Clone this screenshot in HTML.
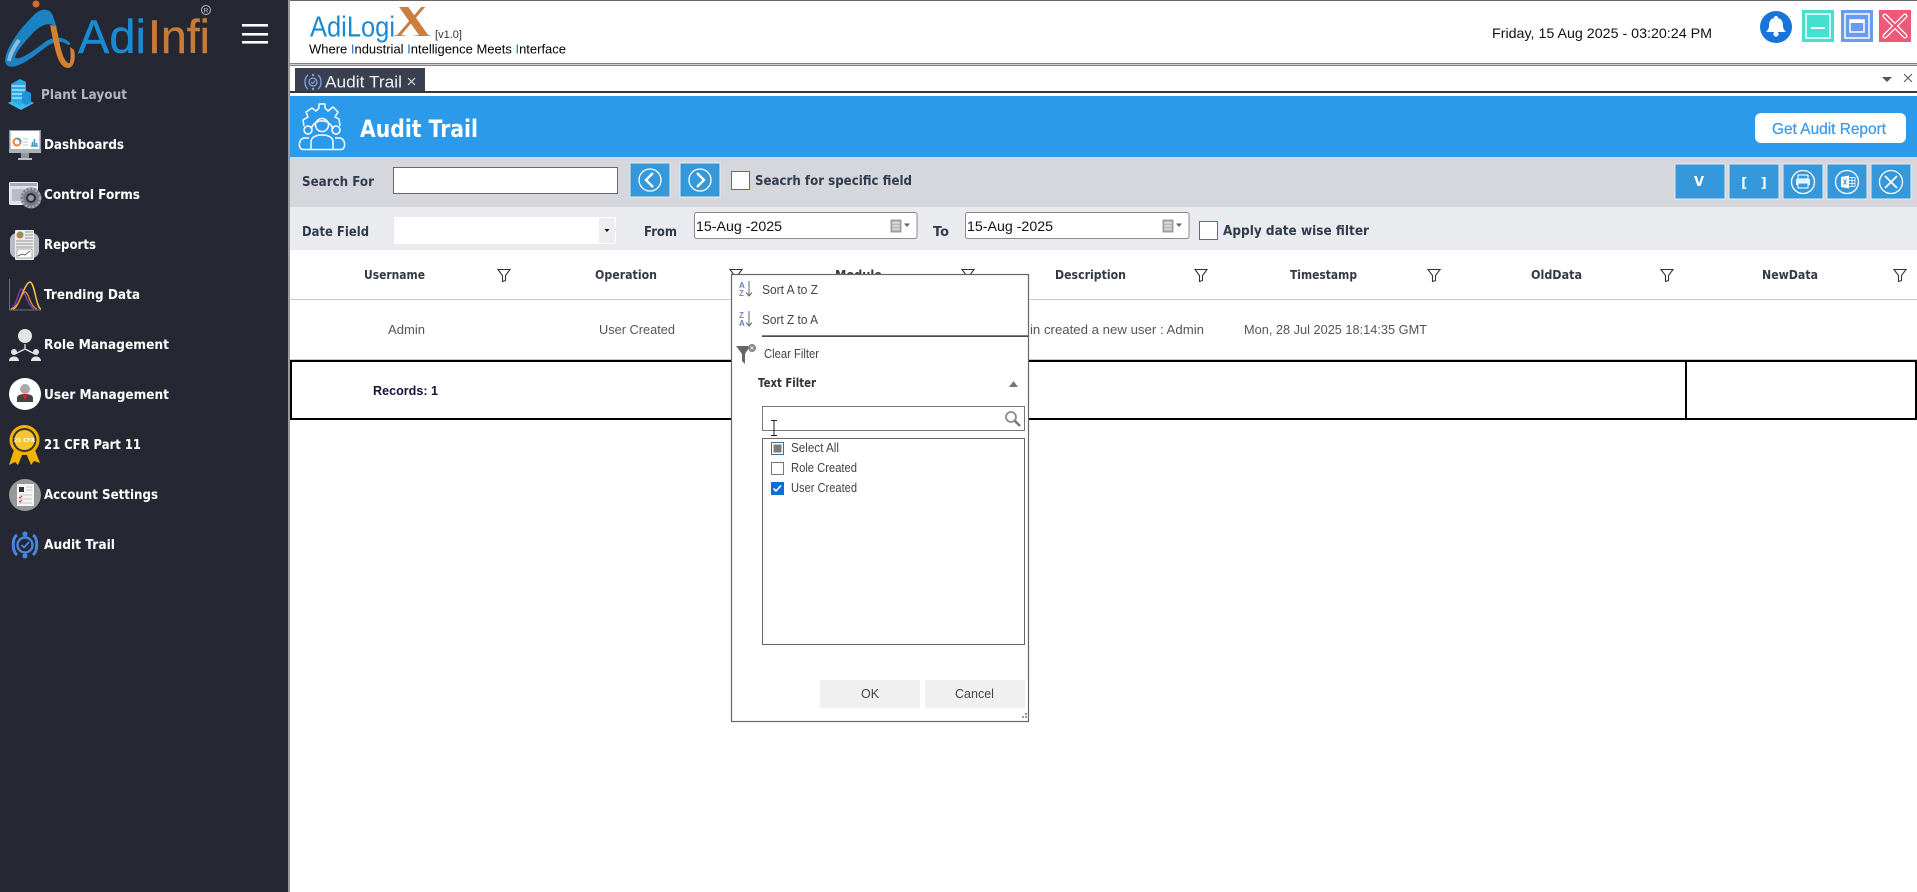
<!DOCTYPE html>
<html lang="en">
<head>
<meta charset="utf-8">
<title>Audit Trail</title>
<style>
html,body{margin:0;padding:0;width:1917px;height:892px;overflow:hidden;background:#fff}
svg{position:absolute;left:0;top:0;display:block}
.b{font-family:"DejaVu Sans",sans-serif;font-weight:700}
.r{font-family:"Liberation Sans",sans-serif}
.d{font-family:"DejaVu Sans",sans-serif}
</style>
</head>
<body>
<svg width="1917" height="892" viewBox="0 0 1917 892" xmlns="http://www.w3.org/2000/svg">
<defs><clipPath id="xc"><rect x="394" y="7" width="36" height="29"/></clipPath></defs>
<!-- backgrounds -->
<rect width="1917" height="892" fill="#fff"/>
<rect x="0" y="0" width="288" height="892" fill="#252833"/>
<rect x="288" y="0" width="2" height="892" fill="#9a9a9a"/>
<rect x="290" y="0" width="1627" height="1" fill="#666"/>
<rect x="290" y="63" width="1627" height="3" fill="#808080"/>
<rect x="290" y="64" width="1627" height="1" fill="#d0d0d0"/>
<rect x="295" y="68" width="130" height="24" fill="#3b4050"/>
<rect x="290" y="91" width="1627" height="2" fill="#333740"/>
<rect x="290" y="96" width="1627" height="61" fill="#2b9aea"/>
<rect x="290" y="157" width="1627" height="50" fill="#d6d7dc"/>
<rect x="290" y="207" width="1627" height="43" fill="#e9ebee"/>
<rect x="290" y="299" width="1627" height="1" fill="#c8c8c8"/>
<rect x="290" y="359" width="1627" height="1" fill="#c8c8c8"/>
<rect x="291" y="361" width="1625" height="58" fill="#fff" stroke="#000" stroke-width="2"/>
<rect x="1685" y="361" width="2" height="58" fill="#000"/>

<!-- sidebar logo -->
<path d="M33 16C41 7 50 8 53 16L57 28C50 21 41 24 31 35C22 45 16 52 15 58C22 60 34 50 45 42C55 35 65 37 71 44L68 45C62 40 55 41 46 47C33 57 17 70 8 66C3 63 5 54 11 44C17 33 25 24 33 16Z" fill="#1b82c4"/>
<path d="M19 40C14 47 10 55 9 61" stroke="#8fbcd8" stroke-width="4" fill="none"/>
<path d="M50 25L56 26C60 42 61 58 68 63C71 65 71 55 70 47L74 50C76 58 74 68 68 68C58 68 55 50 50 25Z" fill="#d6812f"/>
<circle cx="36" cy="4" r="3.5" fill="#e0682a"/>
<text x="78" y="53" font-size="47" class="r" fill="#1a8ad2" stroke="#1a8ad2" stroke-width=".4" textLength="68" lengthAdjust="spacingAndGlyphs">Adi</text>
<text x="148" y="53" font-size="47" class="r" fill="#c87a38" stroke="#c87a38" stroke-width=".4" textLength="62" lengthAdjust="spacingAndGlyphs">Infi</text>
<circle cx="206" cy="10" r="4.5" fill="none" stroke="#bbb" stroke-width="1"/>
<text x="206" y="12.5" font-size="6.5" class="r" fill="#ccc" text-anchor="middle">R</text>
<rect x="242" y="24" width="26" height="2.6" fill="#fff"/>
<rect x="242" y="33" width="26" height="2.6" fill="#fff"/>
<rect x="242" y="41" width="26" height="2.6" fill="#fff"/>

<!-- sidebar icons -->
<g>
<path d="M8 103L21 96L34 103L21 110Z" fill="#38bdf0"/>
<path d="M11 84L20 79L26 82V102L20 105L11 101Z" fill="#2aa8ea"/>
<path d="M12 86H25M12 90H25M12 94H25M12 98H25" stroke="#c6ecfb" stroke-width="1.2"/>
<path d="M22 93L27 91L31 93V103L26 105L22 103Z" fill="#1f92d8"/>
</g>
<g>
<rect x="9" y="130" width="32" height="21" fill="#8b9aa3"/>
<rect x="10.500" y="131" width="29" height="18" fill="#fff"/>
<circle cx="17" cy="142" r="3.500" fill="none" stroke="#e8843c" stroke-width="2"/>
<path d="M17 138.500a3.500 3.500 0 0 1 3.500 3.500" fill="none" stroke="#2a9fd0" stroke-width="2"/>
<path d="M31 146H38M32.500 146V142M34.500 146V139M36.500 146V143" stroke="#3ba1c8" stroke-width="1.600"/>
<path d="M23 139H28M23 142H28M23 145H28" stroke="#c5c5c5"/>
<rect x="9" y="149" width="32" height="4" fill="#a9b4ba"/>
<rect x="21" y="153" width="8" height="5" fill="#8f9aa0"/>
<rect x="18" y="158" width="14" height="2" fill="#b8bfc3"/>
</g>
<g>
<rect x="9.500" y="182.500" width="28" height="22" rx="1" fill="#dfe1e6" stroke="#f2f2f2"/>
<rect x="10" y="183" width="27" height="3" fill="#a9acb4"/>
<rect x="12" y="189" width="13" height="12" fill="#b8bcc4"/>
<circle cx="31" cy="198" r="10.500" fill="#787b85"/>
<circle cx="31" cy="198" r="9" fill="none" stroke="#a9abb3" stroke-width="2.500" stroke-dasharray="2 1.600"/>
<circle cx="31" cy="198" r="5" fill="#2e3038"/>
<circle cx="31" cy="198" r="3" fill="#9598a0"/>
</g>
<g>
<rect x="10" y="233" width="29" height="25" rx="7" fill="#b8bbc1"/>
<rect x="15" y="230" width="19" height="30" rx="1" fill="#eeeeee"/>
<circle cx="20" cy="235" r="3.500" fill="#d9704d"/>
<path d="M20 235V231.500A3.500 3.500 0 0 1 23.500 235Z" fill="#5aa56a"/>
<path d="M25 232H33M25 235H33M25 238H33M16 241H33M16 244H33M16 247H33" stroke="#8e9197" stroke-width="1.100"/>
<rect x="17" y="249" width="15" height="9" fill="#fff" stroke="#777" stroke-width=".6"/>
<path d="M18 256L22 254L25 255L30 251" stroke="#444" fill="none" stroke-width=".8"/>
</g>
<g fill="none">
<path d="M9.500 279V310H41" stroke="#6f727b" stroke-width="1"/>
<path d="M10 309C16 309 19 289 21 289C25 289 27 305 34 309" stroke="#6a3fb5" stroke-width="1.500"/>
<path d="M13 309C19 308 24 283 30 282C35 283 36 308 41 309" stroke="#f5c542" stroke-width="1.500"/>
<path d="M11 309C18 308 22 292 25 292C29 292 30 307 37 309" stroke="#e88a3a" stroke-width="1.300"/>
</g>
<g fill="#e4e4e4">
<circle cx="25" cy="336" r="7"/>
<path d="M25 344V349L15 354M25 349L35 354" stroke="#e4e4e4" stroke-width="1.300" fill="none"/>
<circle cx="14" cy="352" r="3"/><circle cx="36" cy="352" r="3"/>
<path d="M9 361C9 355 19 355 19 361ZM31 361C31 355 41 355 41 361Z"/>
</g>
<g>
<circle cx="25" cy="394" r="16" fill="#fff"/>
<circle cx="25" cy="389" r="5" fill="#a8a8a8"/>
<path d="M17 402V398C17 395 21 394 25 394C29 394 33 395 33 398V402Z" fill="#444"/>
<path d="M22 394H28L25 400Z" fill="#d81e2a"/>
</g>
<g>
<path d="M14 450L9 465L15 462L18 465L23 453ZM35 450L40 463L34 461L31 465L26 453Z" fill="#f2b200"/>
<circle cx="24.500" cy="440" r="15" fill="#f2b200"/>
<circle cx="24.500" cy="440" r="12" fill="#3a3326"/>
<circle cx="24.500" cy="440" r="10" fill="#f7c531"/>
<text x="24.500" y="442" font-size="5.500" class="b" fill="#fff" text-anchor="middle">21 CFR</text>
</g>
<g>
<circle cx="25" cy="495" r="16" fill="#999"/>
<rect x="17" y="484" width="17" height="22" fill="#f4f4f4"/>
<rect x="19" y="487" width="5" height="5" fill="#333"/>
<path d="M26 487H32M26 490H32M19 495H32M19 499H32M19 503H32" stroke="#c8c8c8"/>
<path d="M19 497l1 1 2-2M19 501l1 1 2-2" stroke="#c33" fill="none"/>
</g>
<g fill="none" stroke="#4a86e0">
<path d="M17 535C12 538 12 551 17 555" stroke-width="3"/>
<path d="M33 535C38 538 38 551 33 555" stroke-width="3"/>
<circle cx="25" cy="545" r="7.500" stroke-width="2.400"/>
<path d="M21.500 545l2.500 2.500 5-5.500" stroke-width="1.800"/>
<circle cx="25" cy="534" r="2.500" fill="#4a86e0" stroke="none"/>
<circle cx="25" cy="556" r="2.500" fill="#4a86e0" stroke="none"/>
</g>

<!-- sidebar labels -->
<g class="b" font-size="13.500" fill="#fff">
<text x="41" y="99" fill="#b5b7bc" textLength="86" lengthAdjust="spacingAndGlyphs">Plant Layout</text>
<text x="44" y="149" textLength="80" lengthAdjust="spacingAndGlyphs">Dashboards</text>
<text x="44" y="199" textLength="96" lengthAdjust="spacingAndGlyphs">Control Forms</text>
<text x="44" y="249" textLength="52" lengthAdjust="spacingAndGlyphs">Reports</text>
<text x="44" y="299" textLength="96" lengthAdjust="spacingAndGlyphs">Trending Data</text>
<text x="44" y="349" textLength="125" lengthAdjust="spacingAndGlyphs">Role Management</text>
<text x="44" y="399" textLength="125" lengthAdjust="spacingAndGlyphs">User Management</text>
<text x="44" y="449" textLength="97" lengthAdjust="spacingAndGlyphs">21 CFR Part 11</text>
<text x="44" y="499" textLength="114" lengthAdjust="spacingAndGlyphs">Account Settings</text>
<text x="44" y="549" textLength="71" lengthAdjust="spacingAndGlyphs">Audit Trail</text>
</g>

<!-- top header -->
<text x="310" y="36.500" font-size="29" class="r" fill="#1e88d2" textLength="85" lengthAdjust="spacingAndGlyphs">AdiLogi</text>
<g clip-path="url(#xc)"><text x="392" y="37.500" font-size="52" font-family="Liberation Serif" font-weight="700" fill="#c97f3d" textLength="41" lengthAdjust="spacingAndGlyphs">X</text></g>
<text x="435" y="38" font-size="11" class="r" fill="#333" textLength="27" lengthAdjust="spacingAndGlyphs">[v1.0]</text>
<text x="309" y="53.500" font-size="13" class="r" fill="#000" textLength="257" lengthAdjust="spacingAndGlyphs">Where <tspan fill="#1e6fc8">I</tspan>ndustrial <tspan fill="#1e6fc8">I</tspan>ntelligence Meets <tspan fill="#1e6fc8">I</tspan>nterface</text>
<text x="1492" y="38" font-size="14" class="r" fill="#111" textLength="220" lengthAdjust="spacingAndGlyphs">Friday, 15 Aug 2025 - 03:20:24 PM</text>
<circle cx="1776" cy="27" r="16" fill="#1a73d8"/>
<path d="M1776 16a2 2 0 0 1 2 2c4 1 5 4 5 8 0 3 2 5 3 6h-20c1-1 3-3 3-6 0-4 1-7 5-8a2 2 0 0 1 2-2Z" fill="#fff"/>
<circle cx="1776" cy="34" r="2.600" fill="#fff"/>
<rect x="1802" y="10" width="32" height="32" fill="#45e0cf"/>
<rect x="1806" y="14" width="24" height="24" fill="none" stroke="#fff" stroke-width="1.500"/>
<rect x="1811" y="27" width="14" height="2" fill="#fff"/>
<rect x="1841" y="10" width="32" height="32" fill="#6a9bf0"/>
<rect x="1845" y="14" width="24" height="24" fill="none" stroke="#fff" stroke-width="1.500"/>
<rect x="1850" y="20" width="14" height="12" fill="none" stroke="#fff" stroke-width="1.500"/>
<rect x="1850" y="20" width="14" height="3" fill="#fff"/>
<rect x="1879" y="10" width="32" height="32" fill="#f0587a"/>
<path d="M1885 16L1905 36M1905 16L1885 36" stroke="#fff" stroke-width="5" stroke-linecap="round"/>
<path d="M1885 16L1905 36M1905 16L1885 36" stroke="#f0587a" stroke-width="2.400" stroke-linecap="round"/>

<!-- tab strip -->
<g fill="none" stroke="#7ea6e8">
<path d="M308 75C304 78 304 86 308 89M318 75C322 78 322 86 318 89" stroke-width="1.300"/>
<circle cx="313" cy="82" r="4" stroke-width="1.200"/>
<path d="M311 82l1.500 1.500 3-3" stroke-width="1"/>
<circle cx="313" cy="75" r="1.200" fill="#7ea6e8" stroke="none"/>
<circle cx="313" cy="89" r="1.200" fill="#7ea6e8" stroke="none"/>
</g>
<text x="325" y="87.500" font-size="16.500" class="r" fill="#f2f2f2" textLength="77" lengthAdjust="spacingAndGlyphs">Audit Trail</text>
<path d="M408 78l7 7M415 78l-7 7" stroke="#ddd" stroke-width="1.200"/>
<path d="M1882 77H1892L1887 82Z" fill="#555"/>
<path d="M1904 74l8 8M1912 74l-8 8" stroke="#555" stroke-width="1"/>

<!-- blue title bar -->
<g fill="none" stroke="#fff" stroke-width="1.500" stroke-linejoin="round">
<path d="M304 126L303 120L308 117L306 112L312 108L316 111L319 108V104H325V108L328 111L333 107L338 112L335 117L339 119L340 126"/>
<circle cx="322" cy="125" r="6.500"/>
<path d="M311 129A11.500 11.500 0 0 1 333 129"/>
<circle cx="308" cy="130" r="4"/>
<circle cx="336" cy="130" r="4"/>
<path d="M311 149.500V142C311 137 316 135 322 135C328 135 333 137 333 142V149.500Z"/>
<path d="M311 149.500H303C298 149.500 298 139 304 138H309M333 149.500H341C346 149.500 346 139 340 138H335"/>
</g>
<text x="360" y="137" font-size="24" class="b" fill="#fff" textLength="118" lengthAdjust="spacingAndGlyphs">Audit Trail</text>
<rect x="1755" y="113" width="151" height="30" rx="6" fill="#fff"/>
<text x="1772" y="134" font-size="16" class="r" fill="#3d9ae8" stroke="#3d9ae8" stroke-width=".25" textLength="114" lengthAdjust="spacingAndGlyphs">Get Audit Report</text>

<!-- search row -->
<text x="302" y="186" font-size="13.500" class="b" fill="#2f3a4c" textLength="72" lengthAdjust="spacingAndGlyphs">Search For</text>
<rect x="393.500" y="167.500" width="224" height="26" fill="#fff" stroke="#6a6a6a"/>
<rect x="630" y="163" width="40" height="34" fill="#3498db" stroke="#e6e8ea"/>
<circle cx="650" cy="180" r="11" fill="none" stroke="#fff" stroke-width="1.300"/>
<path d="M653 173L646 180L653 187" fill="none" stroke="#fff" stroke-width="2.400"/>
<rect x="680" y="163" width="40" height="34" fill="#3498db" stroke="#e6e8ea"/>
<circle cx="700" cy="180" r="11" fill="none" stroke="#fff" stroke-width="1.300"/>
<path d="M697 173L704 180L697 187" fill="none" stroke="#fff" stroke-width="2.400"/>
<rect x="731.500" y="171.500" width="18" height="18" fill="#fff" stroke="#2f7f9f"/>
<text x="755" y="185" font-size="13.500" class="b" fill="#2f3a4c" textLength="157" lengthAdjust="spacingAndGlyphs">Seacrh for specific field</text>
<g fill="#3498db" stroke="#e6e8ea">
<rect x="1675" y="164" width="50" height="35"/>
<rect x="1729" y="164" width="50" height="35"/>
<rect x="1783" y="164" width="40" height="35"/>
<rect x="1827" y="164" width="40" height="35"/>
<rect x="1871" y="164" width="40" height="35"/>
</g>
<text x="1699" y="186" font-size="13" class="b" fill="#fff" text-anchor="middle">V</text>
<text x="1754" y="187" font-size="13" class="b" fill="#fff" text-anchor="middle" xml:space="preserve">[   ]</text>
<g fill="none" stroke="#fff">
<circle cx="1803" cy="182" r="11.500" stroke-width="1.300"/>
<rect x="1798" y="175" width="10" height="4" stroke-width="1.100"/>
<rect x="1796" y="179" width="14" height="6" fill="#e4f1fa" stroke="none"/>
<rect x="1798" y="183" width="10" height="5" fill="#3498db" stroke-width="1"/>
<circle cx="1847" cy="182" r="11.500" stroke-width="1.300"/>
<path d="M1841 177L1849 175.500V188.500L1841 187Z" fill="#fff" stroke="none"/>
<path d="M1843.500 179.500L1846.500 184.500M1846.500 179.500L1843.500 184.500" stroke="#3498db" stroke-width="1.100"/>
<path d="M1849 177.500H1855V186.500H1849M1852 177.500V186.500M1849 180.500H1855M1849 183.500H1855" stroke-width=".8"/>
<circle cx="1891" cy="182" r="11.500" stroke-width="1.300"/>
<path d="M1885 176L1897 188M1897 176L1885 188" stroke-width="1.700"/>
</g>

<!-- date row -->
<text x="302" y="236" font-size="13.500" class="b" fill="#2f3a4c" textLength="67" lengthAdjust="spacingAndGlyphs">Date Field</text>
<rect x="394" y="217" width="222" height="27" fill="#fff"/>
<rect x="599" y="218" width="16" height="25" fill="#eeeeee"/>
<path d="M604.500 229H609.500L607 232Z" fill="#111"/>
<text x="644" y="236" font-size="13.500" class="b" fill="#2f3a4c" textLength="33" lengthAdjust="spacingAndGlyphs">From</text>
<g>
<rect x="694.500" y="212.500" width="222.500" height="26" rx="2" fill="#fff" stroke="#8a8a8a"/>
<text x="696" y="231" font-size="14" class="r" fill="#111" textLength="86" lengthAdjust="spacingAndGlyphs">15-Aug -2025</text>
<rect x="891" y="220" width="10" height="12" fill="#b5b8bc" stroke="#777" stroke-width=".7"/>
<path d="M892.500 223H899.500M892.500 226H899.500M892.500 229H899.500" stroke="#fff" stroke-width=".8"/>
<path d="M904 223.500H910L907 227Z" fill="#666"/>
</g>
<text x="933" y="236" font-size="13.500" class="b" fill="#2f3a4c" textLength="16" lengthAdjust="spacingAndGlyphs">To</text>
<g>
<rect x="965.500" y="212.500" width="223.500" height="26" rx="2" fill="#fff" stroke="#8a8a8a"/>
<text x="967" y="231" font-size="14" class="r" fill="#111" textLength="86" lengthAdjust="spacingAndGlyphs">15-Aug -2025</text>
<rect x="1163" y="220" width="10" height="12" fill="#b5b8bc" stroke="#777" stroke-width=".7"/>
<path d="M1164.500 223H1171.500M1164.500 226H1171.500M1164.500 229H1171.500" stroke="#fff" stroke-width=".8"/>
<path d="M1176 223.500H1182L1179 227Z" fill="#666"/>
</g>
<rect x="1199.500" y="221.500" width="18" height="18" fill="#fff" stroke="#2f7f9f"/>
<text x="1223" y="235" font-size="13.500" class="b" fill="#2f3a4c" textLength="146" lengthAdjust="spacingAndGlyphs">Apply date wise filter</text>

<!-- grid header -->
<g class="b" font-size="12.500" fill="#333a45">
<text x="364" y="279" textLength="61" lengthAdjust="spacingAndGlyphs">Username</text>
<text x="595" y="279" textLength="62" lengthAdjust="spacingAndGlyphs">Operation</text>
<text x="835" y="279" textLength="47" lengthAdjust="spacingAndGlyphs">Module</text>
<text x="1055" y="279" textLength="71" lengthAdjust="spacingAndGlyphs">Description</text>
<text x="1290" y="279" textLength="67" lengthAdjust="spacingAndGlyphs">Timestamp</text>
<text x="1531" y="279" textLength="51" lengthAdjust="spacingAndGlyphs">OldData</text>
<text x="1762" y="279" textLength="56" lengthAdjust="spacingAndGlyphs">NewData</text>
</g>
<g fill="none" stroke="#333" stroke-width="1.100">
<path d="M498 269.500H510L505.500 275.500V280.500L502.500 281.500V275.500Z"/>
<path d="M730 269.500H742L737.500 275.500V280.500L734.500 281.500V275.500Z"/>
<path d="M962 269.500H974L969.500 275.500V280.500L966.500 281.500V275.500Z"/>
<path d="M1195 269.500H1207L1202.500 275.500V280.500L1199.500 281.500V275.500Z"/>
<path d="M1428 269.500H1440L1435.500 275.500V280.500L1432.500 281.500V275.500Z"/>
<path d="M1661 269.500H1673L1668.500 275.500V280.500L1665.500 281.500V275.500Z"/>
<path d="M1894 269.500H1906L1901.500 275.500V280.500L1898.500 281.500V275.500Z"/>
</g>

<!-- grid row -->
<g class="r" font-size="13" fill="#555">
<text x="388" y="334" textLength="37" lengthAdjust="spacingAndGlyphs">Admin</text>
<text x="599" y="334" textLength="76" lengthAdjust="spacingAndGlyphs">User Created</text>
<text x="1030" y="334" textLength="174" lengthAdjust="spacingAndGlyphs">in created a new user : Admin</text>
<text x="1244" y="334" textLength="183" lengthAdjust="spacingAndGlyphs">Mon, 28 Jul 2025 18:14:35 GMT</text>
</g>
<text x="373" y="395" font-size="13" class="r" font-weight="700" fill="#14143c" textLength="65" lengthAdjust="spacingAndGlyphs">Records: 1</text>

<!-- filter popup -->
<rect x="731.500" y="274.500" width="297" height="447" fill="#fff" stroke="#666" stroke-width="1.200"/>
<g class="r" font-size="9" font-weight="700">
<text x="739" y="288" fill="#5a7fc0" font-size="8">A</text><text x="739" y="296" fill="#9a78c8" font-size="8">Z</text>
<text x="739" y="318" fill="#9a78c8" font-size="8">Z</text><text x="739" y="326" fill="#5a7fc0" font-size="8">A</text>
</g>
<path d="M749 281V296M746 292.500L749 296L752 292.500M749 311V326M746 322.500L749 326L752 322.500" fill="none" stroke="#666"/>
<g class="r" font-size="12.500" fill="#444">
<text x="762" y="294" textLength="56" lengthAdjust="spacingAndGlyphs">Sort A to Z</text>
<text x="762" y="324" textLength="56" lengthAdjust="spacingAndGlyphs">Sort Z to A</text>
<text x="764" y="358" textLength="55" lengthAdjust="spacingAndGlyphs">Clear Filter</text>
</g>
<rect x="762" y="335.500" width="266" height="1.200" fill="#000"/>
<path d="M736 346H750L745 354V364L742 361V354Z" fill="#666"/>
<circle cx="752" cy="348" r="4" fill="#888"/>
<path d="M750.500 346.500l3 3M753.500 346.500l-3 3" stroke="#fff" stroke-width=".8"/>
<text x="758" y="387" font-size="12.500" class="b" fill="#333" textLength="58" lengthAdjust="spacingAndGlyphs">Text Filter</text>
<path d="M1009 387L1013.500 381L1018 387Z" fill="#777"/>
<rect x="762.500" y="406.500" width="262" height="24" fill="#fff" stroke="#777"/>
<circle cx="1011" cy="417" r="5" fill="none" stroke="#8a8a8a" stroke-width="1.800"/>
<path d="M1015 421L1020 426" stroke="#777" stroke-width="2.400"/>
<rect x="762.500" y="438.500" width="262" height="206" fill="#fff" stroke="#666"/>
<path d="M771 420.500h6M771 435.500h6M774 421V435" stroke="#222" stroke-width="1" fill="none"/>
<rect x="771.500" y="442.500" width="12" height="12" fill="#fff" stroke="#3f6f90"/>
<rect x="773.500" y="444.500" width="8" height="8" fill="#7b7b7b"/>
<rect x="771.500" y="462.500" width="12" height="12" fill="#fff" stroke="#777"/>
<rect x="771" y="482" width="13" height="13" fill="#0a6fd8"/>
<path d="M773.500 488.500l2.500 2.500 5-5.500" stroke="#fff" stroke-width="1.600" fill="none"/>
<g class="r" font-size="12.500" fill="#444">
<text x="791" y="452" textLength="48" lengthAdjust="spacingAndGlyphs">Select All</text>
<text x="791" y="472" textLength="66" lengthAdjust="spacingAndGlyphs">Role Created</text>
<text x="791" y="492" textLength="66" lengthAdjust="spacingAndGlyphs">User Created</text>
</g>
<rect x="820" y="680" width="100" height="28" fill="#f0f0f0"/>
<rect x="925" y="680" width="100" height="28" fill="#f0f0f0"/>
<text x="870" y="698" font-size="12.500" class="r" fill="#444" text-anchor="middle">OK</text>
<text x="974.500" y="698" font-size="12.500" class="r" fill="#444" text-anchor="middle">Cancel</text>
<g fill="#999">
<rect x="1025" y="713" width="2" height="2"/>
<rect x="1022" y="716" width="2" height="2"/>
<rect x="1025" y="716" width="2" height="2"/>
</g>
</svg>
</body>
</html>
